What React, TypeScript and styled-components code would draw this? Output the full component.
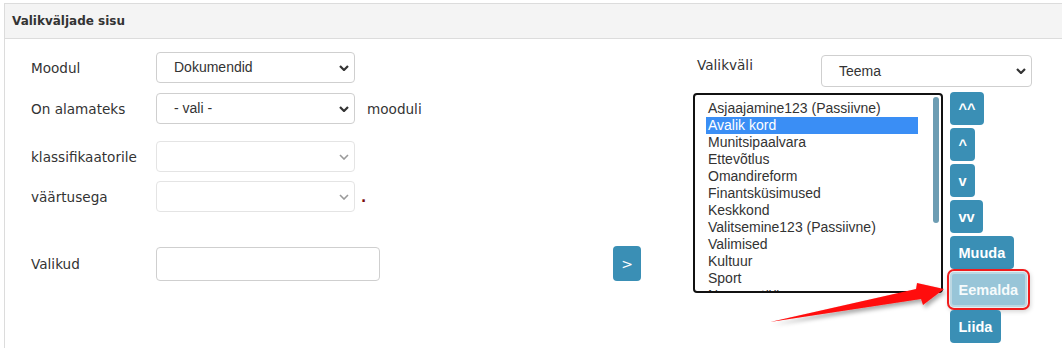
import React from "react";
import styled, { createGlobalStyle } from "styled-components";

const GlobalStyle = createGlobalStyle`
	html, body {
		margin: 0;
		padding: 0;
		background: #fff;
	}
	body {
		font-family: "DejaVu Sans", Verdana, sans-serif;
		color: #333;
		overflow: hidden;
	}
`;

const Panel = styled.div`
	position: relative;
	margin: 3px 0 0 4px;
	width: 1070px;
	height: 360px;
	border: 1px solid #dcdcdc;
	box-sizing: border-box;
`;

const Header = styled.div`
	height: 34px;
	line-height: 34px;
	padding-left: 7px;
	background: #f4f4f4;
	border-bottom: 1px solid #dcdcdc;
	font-size: 12px;
	font-weight: bold;
	color: #333;
`;

const Body = styled.div`
	display: flex;
	gap: 52px;
	padding-top: 13px;
`;

const FormColumn = styled.div`
	flex: 0 0 610px;
	padding-left: 26px;
	display: flex;
	flex-direction: column;
`;

const Row = styled.div<{ $top?: number }>`
	display: flex;
	align-items: center;
	margin-top: ${(p) => p.$top ?? 0}px;
`;

const Label = styled.div`
	flex: 0 0 125px;
	font-size: 13.6px;
	color: #333;
`;

const SelectWrap = styled.div<{ $width: number }>`
	position: relative;
	width: ${(p) => p.$width}px;
`;

const FakeSelect = styled.div<{ $disabled?: boolean; $height: number }>`
	box-sizing: border-box;
	height: ${(p) => p.$height}px;
	border: 1px solid ${(p) => (p.$disabled ? "#e4e4e4" : "#cfcfcf")};
	border-radius: 4px;
	padding-left: 17px;
	font-family: "Liberation Sans", Arial, sans-serif;
	font-size: 14px;
	line-height: ${(p) => p.$height - 2}px;
	color: #333;
	background: #fff;
`;

const Chevron = styled.svg<{ $disabled?: boolean }>`
	position: absolute;
	right: 6px;
	top: 50%;
	margin-top: -3px;
	width: 10px;
	height: 6px;
	stroke: ${(p) => (p.$disabled ? "#9a9a9a" : "#333")};
	stroke-width: ${(p) => (p.$disabled ? 1.6 : 2.2)};
	fill: none;
`;

const Suffix = styled.span<{ $gap: number; $dot?: boolean }>`
	margin-left: ${(p) => p.$gap}px;
	font-size: 13.6px;
	color: ${(p) => (p.$dot ? "#7a0d0d" : "#333")};
	font-weight: ${(p) => (p.$dot ? "bold" : "normal")};
`;

const TextInput = styled.div`
	box-sizing: border-box;
	width: 224px;
	height: 34px;
	border: 1px solid #cfcfcf;
	border-radius: 4px;
`;

const MoveButton = styled.button`
	margin-left: auto;
	width: 28px;
	height: 35px;
	border: none;
	border-radius: 4px;
	background: #3a8fb5;
	color: #fff;
	font-family: "DejaVu Sans", sans-serif;
	font-size: 14px;
	padding: 0;
`;

const RightColumn = styled.div`
	display: flex;
	flex-direction: column;
	padding-top: 3px;
`;

const TopRow = styled.div`
	display: flex;
	align-items: flex-start;
`;

const RightLabel = styled.div`
	flex: 0 0 128px;
	padding-left: 4px;
	box-sizing: border-box;
	font-size: 13.6px;
	line-height: 20px;
`;

const ListRow = styled.div`
	display: flex;
	align-items: flex-start;
	gap: 7px;
	margin-top: 5px;
`;

const ListBox = styled.div`
	position: relative;
	box-sizing: border-box;
	width: 250px;
	height: 200px;
	margin-top: 1px;
	border: 2px solid #111;
	border-radius: 4px;
	padding: 5px 0 0 11px;
	overflow: hidden;
	font-family: "Liberation Sans", Arial, sans-serif;
	font-size: 14px;
`;

const Option = styled.div<{ $selected?: boolean }>`
	width: 212px;
	height: 17px;
	line-height: 17px;
	padding-left: 2px;
	box-sizing: border-box;
	white-space: nowrap;
	color: ${(p) => (p.$selected ? "#fff" : "#333")};
	background: ${(p) => (p.$selected ? "#3a8ef5" : "transparent")};
`;

const ScrollThumb = styled.div`
	position: absolute;
	right: 2px;
	top: 2px;
	width: 6px;
	height: 126px;
	border-radius: 3px;
	background: #6d9db3;
`;

const ButtonStack = styled.div`
	display: flex;
	flex-direction: column;
	align-items: flex-start;
	gap: 3px;
`;

const ActionButton = styled.button<{ $marked?: boolean }>`
	box-sizing: border-box;
	height: ${(p) => (p.$marked ? 35 : 33)}px;
	padding: 0 ${(p) => (p.$marked ? 6.5 : 8.5)}px;
	border: ${(p) => (p.$marked ? "2px solid #bcd8e3" : "none")};
	border-radius: 4px;
	background: ${(p) => (p.$marked ? "#98c5d8" : "#3a8fb5")};
	color: ${(p) => (p.$marked ? "#f6fbfc" : "#fff")};
	font-family: "Liberation Sans", Arial, sans-serif;
	font-weight: bold;
	font-size: 14.5px;
	box-shadow: ${(p) =>
		p.$marked ? "0 0 0 1px #e8eef1, 0 0 0 3px #f01c1c, 1px 2px 4px 3px rgba(0,0,0,0.15)" : "none"};
`;

const ArrowOverlay = styled.svg`
	position: absolute;
	left: 755px;
	top: 266px;
	width: 200px;
	height: 70px;
	overflow: visible;
`;

const items = [
	"Asjaajamine123 (Passiivne)",
	"Avalik kord",
	"Munitsipaalvara",
	"Ettevõtlus",
	"Omandireform",
	"Finantsküsimused",
	"Keskkond",
	"Valitsemine123 (Passiivne)",
	"Valimised",
	"Kultuur",
	"Sport",
	"Noorsootöö",
];

const buttons = ["^^", "^", "v", "vv", "Muuda", "Eemalda", "Liida"];

const Select = ({
	width,
	height = 31,
	value,
	disabled,
}: {
	width: number;
	height?: number;
	value?: string;
	disabled?: boolean;
}) => (
	<SelectWrap $width={width}>
		<FakeSelect $disabled={disabled} $height={height}>
			{value}
		</FakeSelect>
		<Chevron $disabled={disabled} viewBox="0 0 10 6">
			<polyline points="1,1 5,5 9,1" />
		</Chevron>
	</SelectWrap>
);

const App = () => {
	return (
		<>
			<GlobalStyle />
			<Panel>
				<Header>Valikväljade sisu</Header>
				<Body>
					<FormColumn>
						<Row>
							<Label>Moodul</Label>
							<Select width={199} value="Dokumendid" />
						</Row>
						<Row $top={10}>
							<Label>On alamateks</Label>
							<Select width={199} value="- vali -" />
							<Suffix $gap={12}>mooduli</Suffix>
						</Row>
						<Row $top={17}>
							<Label>klassifikaatorile</Label>
							<Select width={199} disabled />
						</Row>
						<Row $top={9}>
							<Label>väärtusega</Label>
							<Select width={199} disabled />
							<Suffix $gap={6} $dot>
								.
							</Suffix>
						</Row>
						<Row $top={34}>
							<Label>Valikud</Label>
							<TextInput />
							<MoveButton>&gt;</MoveButton>
						</Row>
					</FormColumn>
					<RightColumn>
						<TopRow>
							<RightLabel>Valikväli</RightLabel>
							<Select width={211} height={32} value="Teema" />
						</TopRow>
						<ListRow>
							<ListBox>
								{items.map((item) => (
									<Option key={item} $selected={item === "Avalik kord"}>
										{item}
									</Option>
								))}
								<ScrollThumb />
							</ListBox>
							<ButtonStack>
								{buttons.map((b) => (
									<ActionButton key={b} $marked={b === "Eemalda"}>
										{b}
									</ActionButton>
								))}
							</ButtonStack>
						</ListRow>
					</RightColumn>
				</Body>
				<ArrowOverlay viewBox="0 0 200 70">
					<defs>
						<filter id="arrowShadow" x="-20%" y="-50%" width="140%" height="200%">
							<feDropShadow dx="2" dy="3" stdDeviation="2" floodColor="#000" floodOpacity="0.35" />
						</filter>
					</defs>
					<polygon
						points="10,52 156,19 157,13 184,19 163,35 161,29"
						fill="#ff0a0a"
						filter="url(#arrowShadow)"
					/>
				</ArrowOverlay>
			</Panel>
		</>
	);
};

export default App;
